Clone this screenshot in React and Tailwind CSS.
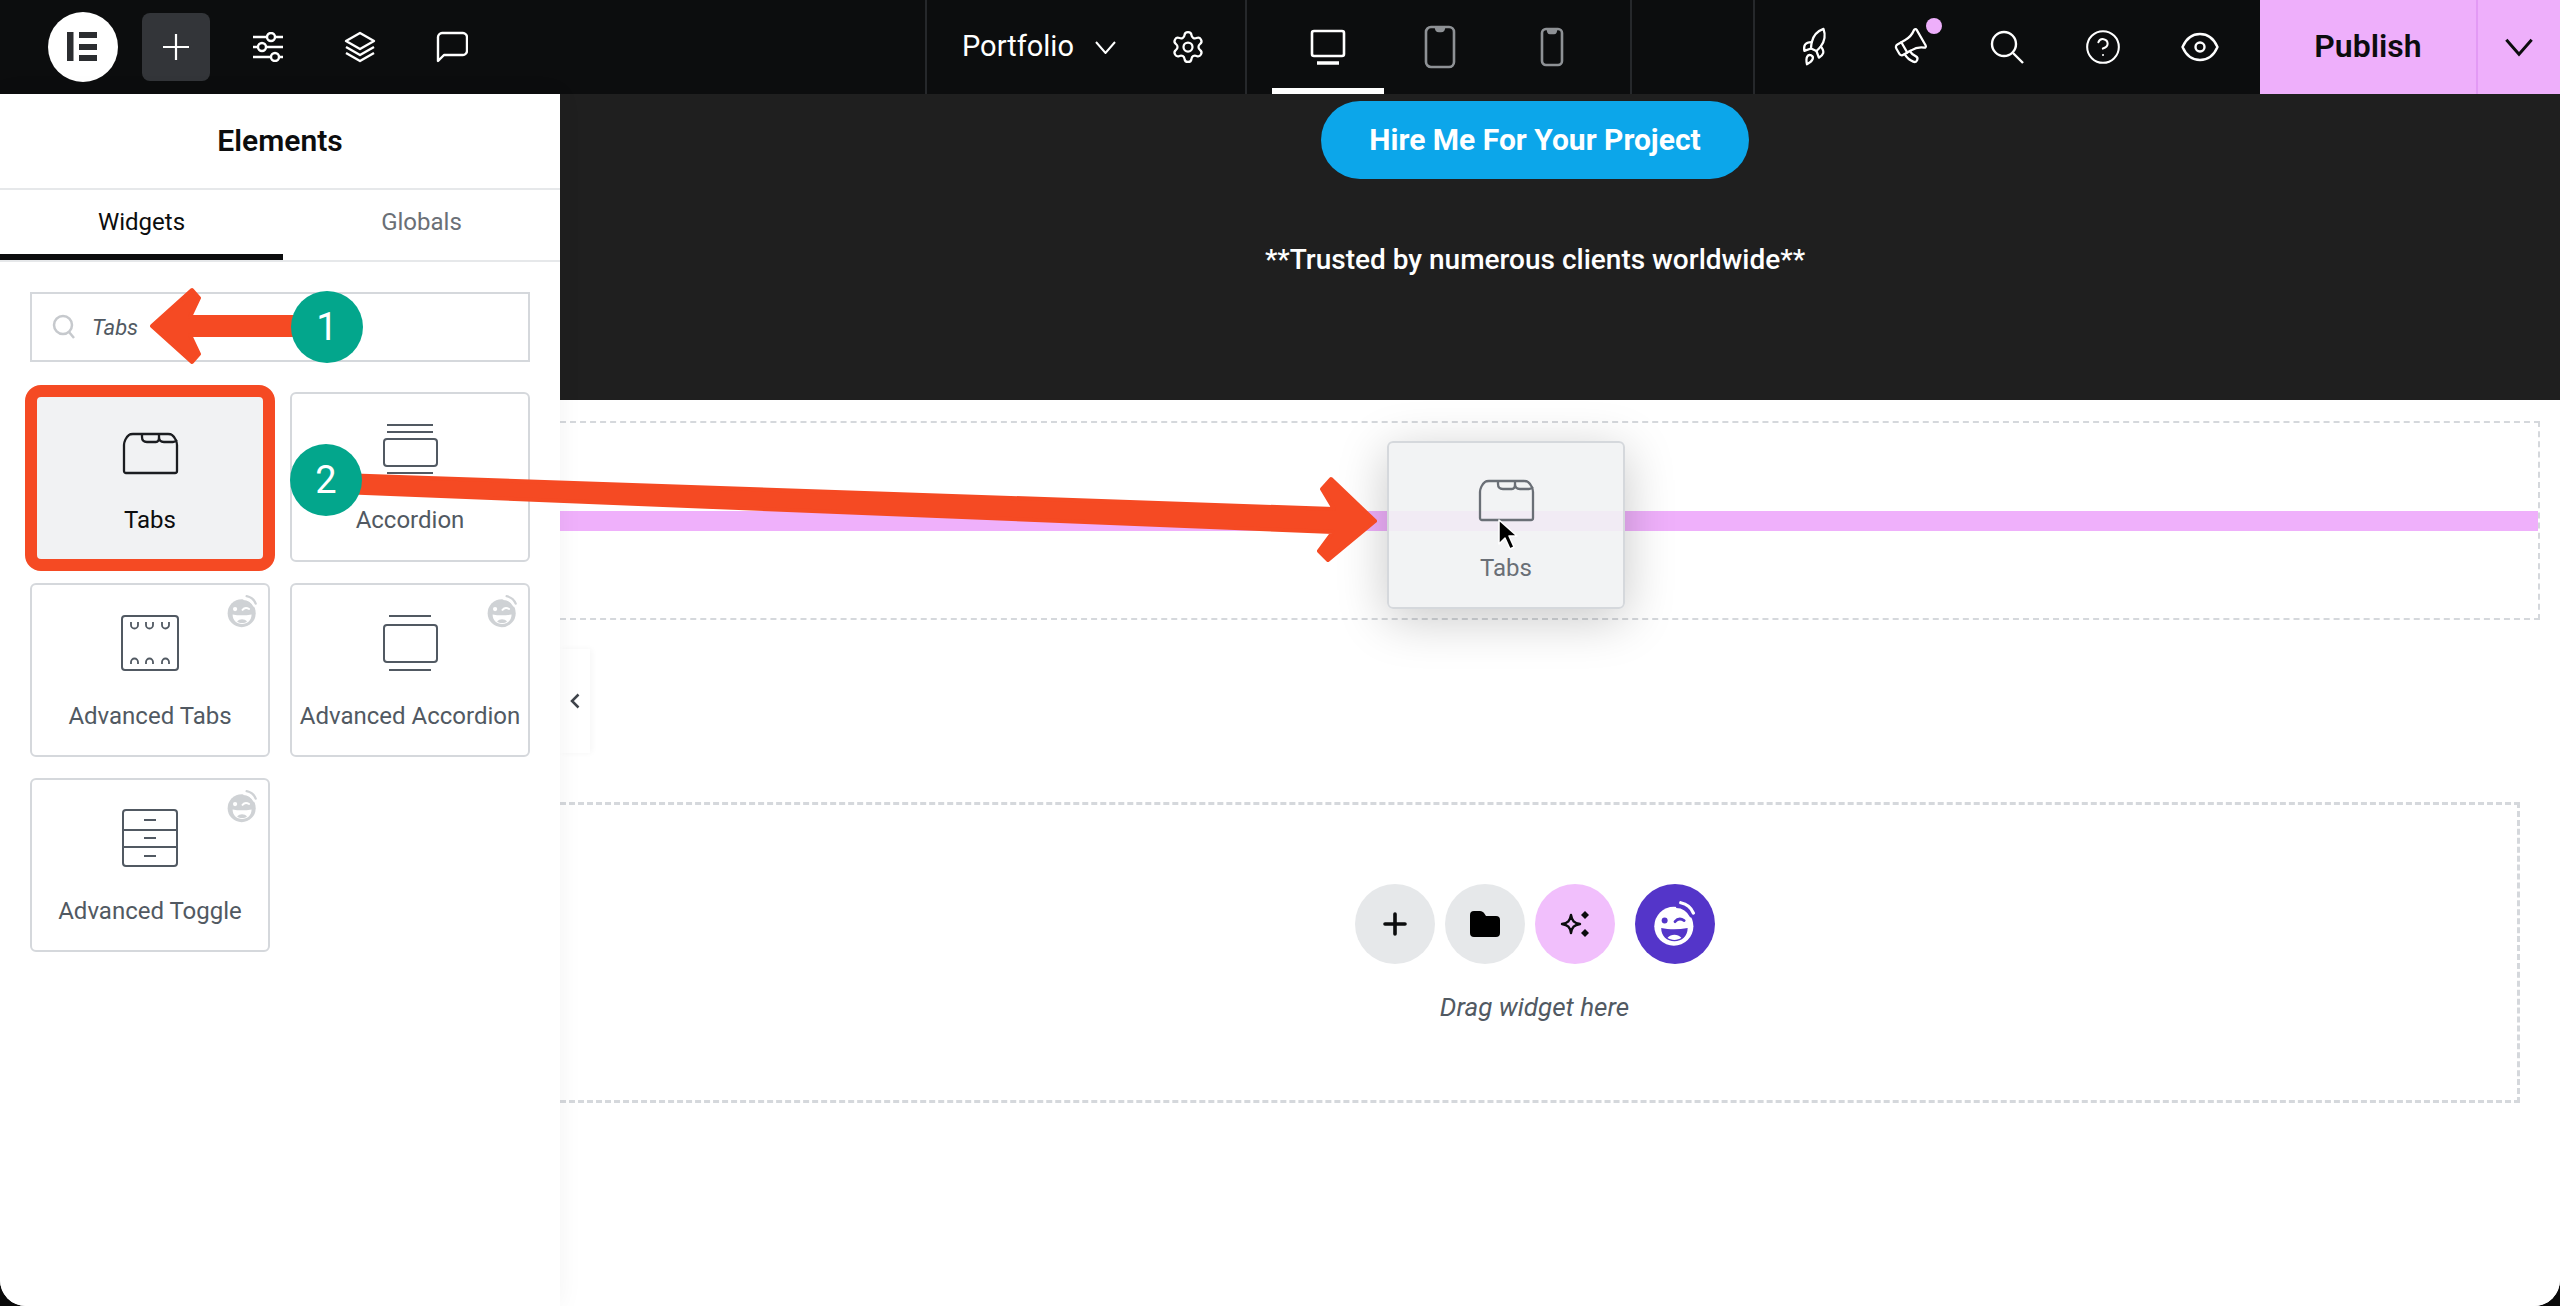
import React from "react";
import { Rocket, Settings, CircleHelp, Megaphone } from "lucide-react";

const Chevron = ({ w = 21, h = 13, cls = "text-white", sw = 2 }) => (
  <svg width={w} height={h} viewBox="0 0 21 13" className={cls} fill="none" stroke="currentColor" strokeWidth={sw}>
    <path d="M1 1l9.5 11L20 1" />
  </svg>
);

const Face = ({ size = 28, face = "#cfd2d5", cut = "#fff", hair = "#cfd2d5" }) => (
  <svg width={size} height={size} viewBox="0 0 40 40">
    <circle cx="19" cy="22" r="17" fill={face} />
    <path d="M21 3c7 0 12 4 15 10" fill="none" stroke={cut} strokeWidth="6" />
    <path d="M25 1.500c5 1 9 4 11 9" fill="none" stroke={hair} strokeWidth="2.800" strokeLinecap="round" />
    <circle cx="11" cy="17" r="2.600" fill={cut} />
    <path d="M20 18c2-2.500 5-3 8-1" fill="none" stroke={cut} strokeWidth="2.400" strokeLinecap="round" />
    <path d="M8 23.500c7 1.500 15 1.500 23 0 0 7-5 11.500-11.500 11.500S8 30.500 8 23.500z" fill={cut} />
    <path d="M13.500 32c3-3.500 9-3.500 12 0-3 2.500-9 2.500-12 0z" fill={face} />
  </svg>
);

const TabsIcon = ({ color }) => (
  <svg width="57" height="43" viewBox="0 0 57 43" fill="none" stroke={color} strokeWidth="2.300" strokeLinejoin="round">
    <path d="M2 39V13c0-3 2-8 5-10 1-1 2-1 4-1h35c2 0 3 0 4 1 3 2 5 7 5 10v26c0 1-1 2-2 2H4c-1 0-2-1-2-2z" />
    <path d="M20 2v3c0 3 2 5 5 5h9c2 0 3-2 3-5V2M37 5c0 3 2 5 5 5h9c2 0 3-1 4-2" />
  </svg>
);
const AccordionIcon = () => (
  <svg width="55" height="50" viewBox="0 0 55 50" fill="none" stroke="#515962" strokeWidth="2">
    <path d="M4 1h46M4 8h46M4 49h46" />
    <rect x="1" y="15" width="53" height="27" rx="3" />
  </svg>
);
const AdvTabsIcon = () => (
  <svg width="58" height="56" viewBox="0 0 58 56" fill="none" stroke="#515962" strokeWidth="2">
    <rect x="1" y="1" width="56" height="54" rx="3" />
    <path d="M10 7v3a3.500 3.500 0 0 0 7 0V7M25 7v3a3.500 3.500 0 0 0 7 0V7M41 7v3a3.500 3.500 0 0 0 7 0V7M10 49v-2a3.500 3.500 0 0 1 7 0v2M25 49v-2a3.500 3.500 0 0 1 7 0v2M41 49v-2a3.500 3.500 0 0 1 7 0v2" strokeWidth="1.800" />
  </svg>
);
const AdvAccordionIcon = () => (
  <svg width="55" height="56" viewBox="0 0 55 56" fill="none" stroke="#515962" strokeWidth="2">
    <path d="M6 1h42M6 55h42" />
    <rect x="1" y="10" width="53" height="37" rx="3" />
  </svg>
);
const ToggleIcon = () => (
  <svg width="56" height="58" viewBox="0 0 56 58" fill="none" stroke="#515962" strokeWidth="2">
    <rect x="1" y="1" width="54" height="56" rx="3" />
    <path d="M1 21h54M1 38h54M22 11h12M22 29h12M22 47h12" />
  </svg>
);

const cards = [
  { name: "Tabs", icon: <TabsIcon color="#1b1d20" />, box: "h-[170px] pt-[38px]", gap: "mt-[30px]", active: true },
  { name: "Accordion", icon: <AccordionIcon />, box: "h-[170px] pt-[30px]", gap: "mt-[31px]" },
  { name: "Advanced Tabs", icon: <AdvTabsIcon />, box: "h-[174px] pt-[30px]", gap: "mt-[30px]", pro: true },
  { name: "Advanced Accordion", icon: <AdvAccordionIcon />, box: "h-[174px] pt-[30px]", gap: "mt-[30px]", pro: true },
  { name: "Advanced Toggle", icon: <ToggleIcon />, box: "h-[174px] pt-[29px]", gap: "mt-[29px]", pro: true },
];

function Card({ c }) {
  return (
    <div className={`relative flex flex-col items-center rounded-[6px] border-2 border-[#d5d8dc] ${c.box} ${c.active ? "bg-[#f1f2f3]" : "bg-white"}`}>
      {c.active && <div className="absolute -left-[7px] -right-[7px] -top-[9px] -bottom-[11px] rounded-[16px] border-[12px] border-[#f54a23]" />}
      {c.pro && (
        <div className="absolute right-[9px] top-[10px]">
          <Face size={33} />
        </div>
      )}
      {c.icon}
      <span className={`${c.gap} text-[24px] leading-[30px] whitespace-nowrap ${c.active ? "text-[#0c0d0e]" : "text-[#515962]"}`}>{c.name}</span>
    </div>
  );
}

const Slot = ({ children, cls = "w-[92px]" }) => <div className={`flex h-full items-center justify-center ${cls}`}>{children}</div>;

function TopBar() {
  return (
    <div className="flex h-[94px] shrink-0 bg-[#0c0d0e] text-white">
      <div className="flex w-[927px] items-center border-r-2 border-[#26282b] pl-[48px]">
        <svg width="70" height="70" viewBox="0 0 70 70">
          <circle cx="35" cy="35" r="35" fill="#fff" />
          <path d="M19 20h6.500v29H19zM31 20h18v6H31zM31 32h18v6H31zM31 43h18v6H31z" fill="#2b2d30" />
        </svg>
        <div className="ml-[24px] flex h-[68px] w-[68px] items-center justify-center rounded-[8px] bg-[#333539]">
          <svg width="28" height="28" viewBox="0 0 28 28" stroke="#fff" strokeWidth="2.200">
            <path d="M14 1v26M1 14h26" />
          </svg>
        </div>
        <div className="ml-[12px] flex h-full">
          <Slot>
            <svg width="32" height="30" viewBox="0 0 32 30" fill="none" stroke="#fff" strokeWidth="2.400">
              <path d="M1 5h14M23 5h8M1 15h5M14 15h17M1 25h18M27 25h4" />
              <circle cx="19" cy="5" r="4" />
              <circle cx="10" cy="15" r="4" />
              <circle cx="23" cy="25" r="4" />
            </svg>
          </Slot>
          <Slot>
            <svg width="32" height="32" viewBox="0 0 32 32" fill="none" stroke="#fff" strokeWidth="2.400" strokeLinejoin="round">
              <path d="M16 2L30 10l-14 8L2 10z" />
              <path d="M2 16l14 8 14-8M2 22l14 8 14-8" />
            </svg>
          </Slot>
          <Slot>
            <svg width="32" height="32" viewBox="0 0 32 32" fill="none" stroke="#fff" strokeWidth="2.400" strokeLinejoin="round">
              <path d="M2 30V6c0-2 2-4 4-4h21c2 0 4 2 4 4v14c0 2-2 4-4 4H8z" />
            </svg>
          </Slot>
        </div>
      </div>

      <div className="flex w-[320px] items-center border-r-2 border-[#26282b] pl-[35px]">
        <span className="w-[133px] pb-[2px] text-[29px] leading-[34px]">Portfolio</span>
        <Chevron w={21} h={13} />
        <Settings size={36} strokeWidth={1.500} className="ml-[54px]" />
      </div>

      <div className="flex w-[385px] border-r-2 border-[#26282b] pl-[25px]">
        <Slot cls="relative w-[112px]">
          <svg width="36" height="36" viewBox="0 0 36 36" fill="none" stroke="#fff" strokeWidth="2.600">
            <rect x="2" y="2" width="32" height="25" rx="2" />
            <path d="M7 34h22" strokeWidth="3.500" />
          </svg>
          <div className="absolute bottom-0 left-0 right-0 h-[6px] bg-white" />
        </Slot>
        <Slot cls="w-[112px]">
          <svg width="32" height="44" viewBox="0 0 32 44" fill="none" stroke="#8e9195" strokeWidth="2.600">
            <rect x="2" y="2" width="28" height="40" rx="5" />
            <path d="M12 2c0 3 1 4 3 4h2c2 0 3-1 3-4" fill="#8e9195" />
          </svg>
        </Slot>
        <Slot cls="w-[112px]">
          <svg width="24" height="40" viewBox="0 0 24 40" fill="none" stroke="#8e9195" strokeWidth="2.600">
            <rect x="2" y="2" width="20" height="36" rx="4" />
            <path d="M8 2c0 3 1 4 2 4h4c1 0 2-1 2-4" fill="#8e9195" />
          </svg>
        </Slot>
      </div>

      <div className="w-[123px] border-r-2 border-[#26282b]" />

      <div className="flex w-[505px] pl-[12px]">
        <Slot cls="w-[96px]">
          <Rocket size={34} strokeWidth={1.600} className="-rotate-[20deg]" />
        </Slot>
        <Slot cls="relative w-[96px]">
          <Megaphone size={36} strokeWidth={1.500} className="-rotate-[30deg]" />
          <div className="absolute left-[63px] top-[18px] h-[16px] w-[16px] rounded-full bg-[#eeaffb]" />
        </Slot>
        <Slot cls="w-[96px]">
          <svg width="34" height="34" viewBox="0 0 34 34" fill="none" stroke="#fff" strokeWidth="2.400">
            <circle cx="14" cy="14" r="12" />
            <path d="M23 23l10 10" />
          </svg>
        </Slot>
        <Slot cls="w-[96px]">
          <CircleHelp size={38} strokeWidth={1.300} />
        </Slot>
        <Slot cls="w-[96px] pl-[2px]">
          <svg width="38" height="30" viewBox="0 0 38 30" fill="none" stroke="#fff" strokeWidth="2.400" strokeLinejoin="round">
            <path d="M1.500 15C5 7 11 2 19 2s14 5 17.500 13C33 23 27 28 19 28S5 23 1.500 15z" />
            <circle cx="19" cy="15" r="4.500" />
          </svg>
        </Slot>
      </div>

      <div className="flex w-[218px] items-center justify-center border-r-2 border-[#e29af4] bg-[#eeaffb] pb-[2px] text-[32px] font-semibold text-[#0c0d0e]">Publish</div>
      <div className="flex flex-1 items-center justify-center bg-[#eeaffb]">
        <Chevron w={28} h={24} cls="text-[#0c0d0e]" sw={2.200} />
      </div>
    </div>
  );
}

function Panel() {
  return (
    <div className="relative z-10 flex w-[560px] shrink-0 flex-col bg-white shadow-[0_0_24px_rgba(0,0,0,0.05)]">
      <div className="flex h-[94px] items-center justify-center pb-[2px] text-[30px] font-semibold text-[#0c0d0e]">Elements</div>
      <div className="flex h-[74px] border-y-2 border-[#e6e8ea]">
        <div className="flex w-[283px] items-center justify-center border-b-[6px] border-[#0c0d0e] text-[24px] text-[#0c0d0e]">Widgets</div>
        <div className="flex flex-1 items-center justify-center pb-[6px] text-[24px] text-[#6a6f76]">Globals</div>
      </div>
      <div className="px-[30px] pt-[30px]">
        <div className="flex h-[70px] items-center gap-[16px] border-2 border-[#d5d8dc] pl-[20px]">
          <svg width="24" height="28" viewBox="0 0 24 28" fill="none" stroke="#c6c9cd" strokeWidth="2.500">
            <circle cx="11" cy="12" r="9" />
            <path d="M17 19l5 6" />
          </svg>
          <span className="text-[22px] italic text-[#515962]">Tabs</span>
        </div>
        <div className="mt-[30px] grid grid-cols-[240px_240px] gap-x-[20px] gap-y-[21px]">
          {cards.map((c) => (
            <Card key={c.name} c={c} />
          ))}
        </div>
      </div>
    </div>
  );
}

function Main() {
  return (
    <div className="relative flex min-w-0 flex-1 flex-col bg-white">
      <div className="flex h-[306px] flex-col items-center bg-[#1f1f1f] pr-[50px] pt-[7px] text-white">
        <div className="flex h-[78px] w-[428px] items-center justify-center rounded-full bg-[#0ca6ea] pb-[2px] text-[30px] font-bold">Hire Me For Your Project</div>
        <p className="mt-[63px] text-[28px] font-medium leading-[36px]">**Trusted by numerous clients worldwide**</p>
      </div>

      <div className="mr-[20px] mt-[21px] flex h-[199px] items-center border-y-2 border-r-2 border-dashed border-[#d5d8dc]">
        <div className="h-[20px] w-full bg-[#efb0fb]" />
      </div>

      <div className="absolute left-0 top-[555px] flex h-[104px] w-[30px] items-center justify-center bg-white shadow-[2px_0_6px_rgba(0,0,0,0.04)]">
        <svg width="10" height="16" viewBox="0 0 10 16" fill="none" stroke="#3f444b" strokeWidth="2.500">
          <path d="M8.500 1.500L2 8l6.500 6.500" />
        </svg>
      </div>

      <div className="mr-[40px] mt-[182px] flex h-[301px] flex-col items-center border-y-[3px] border-r-[3px] border-dashed border-[#d5d8dc] pr-[8px] pt-[79px]">
        <div className="flex gap-[10px]">
          <div className="flex h-[80px] w-[80px] items-center justify-center rounded-full bg-[#e6e8ea]">
            <svg width="24" height="24" viewBox="0 0 24 24" stroke="#0c0d0e" strokeWidth="3.600" strokeLinecap="round">
              <path d="M12 2v20M2 12h20" />
            </svg>
          </div>
          <div className="flex h-[80px] w-[80px] items-center justify-center rounded-full bg-[#e6e8ea]">
            <svg width="30" height="26" viewBox="0 0 30 26" fill="#000">
              <path d="M0 4a4 4 0 0 1 4-4h6c2 0 3 1 4 2l2 3h10a4 4 0 0 1 4 4v13a4 4 0 0 1-4 4H4a4 4 0 0 1-4-4z" />
            </svg>
          </div>
          <div className="flex h-[80px] w-[80px] items-center justify-center rounded-full bg-[#f1bffc]">
            <svg width="32" height="28" viewBox="0 0 32 28" fill="none" stroke="#0c0d0e" strokeWidth="2.400" strokeLinejoin="round">
              <path d="M12 6c1 6 3 8 9 9-6 1-8 3-9 9-1-6-3-8-9-9 6-1 8-3 9-9z" transform="translate(0 -1)" />
              <path d="M26 1l4 4-4 4-4-4zM26 19l4 4-4 4-4-4z" fill="#0c0d0e" stroke="none" />
            </svg>
          </div>
          <div className="flex h-[80px] w-[80px] items-center justify-center rounded-full bg-[#5435c9] ml-[10px]">
            <Face size={46} face="#fff" cut="#5435c9" hair="#fff" />
          </div>
        </div>
        <p className="mt-[28px] text-[26px] italic leading-[30px] text-[#515962]">Drag widget here</p>
      </div>

      <div className="absolute left-[827px] top-[347px] flex h-[168px] w-[238px] flex-col items-center rounded-[6px] border-2 border-[#d5d8dc] bg-[#f1f2f3]/90 pt-[36px] shadow-[0_10px_50px_rgba(0,0,0,0.22)]">
        <TabsIcon color="#6a6f76" />
        <span className="mt-[31px] text-[24px] leading-[30px] text-[#6a6f76]">Tabs</span>
      </div>
    </div>
  );
}

const Badge = ({ n, cls }) => (
  <div className={`absolute z-30 flex h-[72px] w-[72px] items-center justify-center rounded-full bg-[#03a68c] text-[38px] text-white ${cls}`}>{n}</div>
);

export default function App() {
  return (
    <div className="relative h-[1306px] w-[2560px] overflow-hidden bg-[#0a0a0a] font-['Roboto',sans-serif]">
      <div className="flex h-full flex-col overflow-hidden rounded-b-[26px] bg-white">
        <TopBar />
        <div className="flex min-h-0 flex-1">
          <Panel />
          <Main />
        </div>
      </div>

      <svg className="pointer-events-none absolute left-0 top-0 z-20" width="2560" height="1306" fill="#f54a23" stroke="#f54a23" strokeWidth="4" strokeLinejoin="round">
        <path d="M152 326L192 290l7 8-9 19h110v18H190l9 19-7 8z" />
        <path d="M340 475l994 34-12-20 9-10 44 42-47 39-9-9 14-19-993-40z" />
        <g stroke="#fff" strokeWidth="1.500" fill="#000" strokeLinejoin="round">
          <path d="M1499 520v24l6-6 5 11 4-2-5-11h8z" />
        </g>
      </svg>

      <Badge n="1" cls="left-[291px] top-[291px]" />
      <Badge n="2" cls="left-[290px] top-[444px]" />
    </div>
  );
}
